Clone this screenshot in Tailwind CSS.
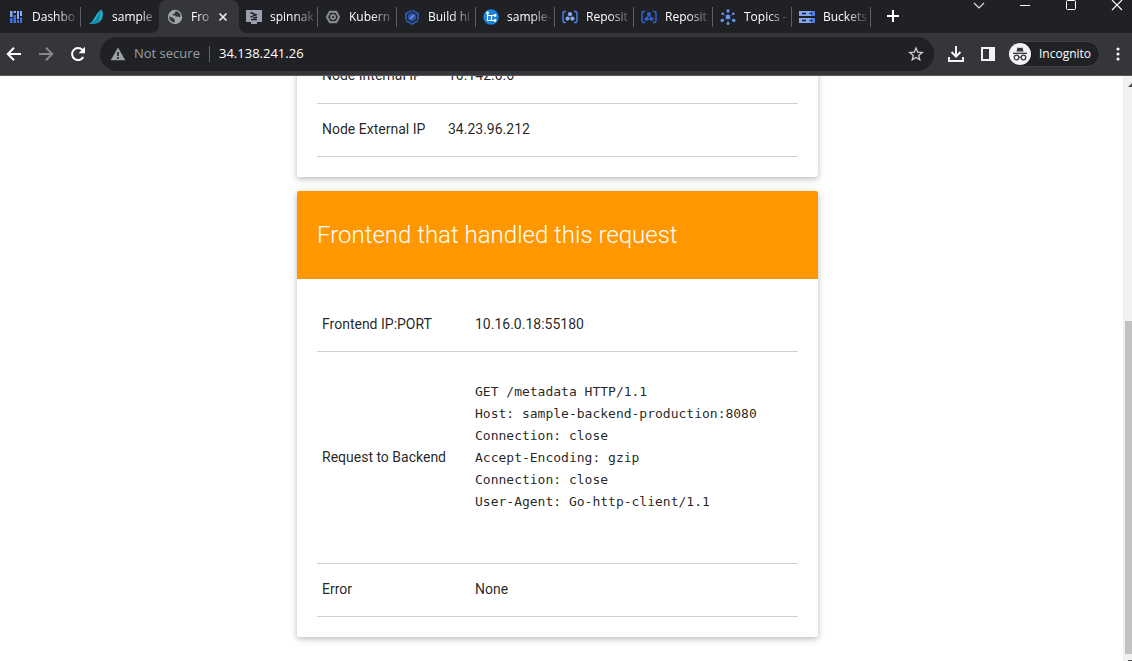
<!DOCTYPE html>
<html lang="en">
<head>
<meta charset="utf-8">
<title>Frontend</title>
<script src="https://cdn.jsdelivr.net/npm/@tailwindcss/browser@4"></script>
</head>
<body class="flex h-screen flex-col overflow-hidden bg-white font-['Roboto',sans-serif]">
<header class="shrink-0 border-b border-[#5a5659] bg-[#35363a] font-['Open_Sans','Noto_Sans',sans-serif] text-white">
  <div class="flex h-[33px] items-start bg-[#202124] pl-0.5">
    <nav class="flex text-[12px]" aria-label="Tabs">
      <a href="#" class="flex h-[33px] w-[79px] items-center pl-1.5">
        <svg class="mr-2 size-4 shrink-0" viewBox="0 0 16 16"><path d="M2 2h2.500v6H2zM5.500 2H8v2H5.500zM9 2h2v8H9zM12 2h2v5h-2z" fill="#86aaf3"/><path d="M2 9h2.500v5H2zM5.500 6H8v8H5.500zM9 11h2v3H9zM12 8.500h2V14h-2z" fill="#3f72e0"/></svg>
        <span class="flex-1 whitespace-nowrap mask-r-from-50%">Dashbo</span><span class="h-5 w-px bg-[#5f6064]"></span>
      </a>
      <a href="#" class="flex h-[33px] w-[78px] items-center pl-[7px]">
        <svg class="mr-2 size-4 shrink-0" viewBox="0 0 16 16"><path d="M13.500.500C7.500 4 6.500 12 1 15c6 0 10-.5 12.500-4.500C15.500 7 15 3 13.500.500z" fill="#1fb5d2"/><path d="M13.500.500C10 5 10 12 1 15c6 0 9-1 10.500-4.500 1-3.500.5-6.500 2-10z" fill="#128aa5"/></svg>
        <span class="flex-1 whitespace-nowrap mask-r-from-60%">sample</span>
      </a>
      <a href="#" aria-current="page" class="relative flex h-[33px] w-20 items-center rounded-t-lg bg-[#35363a] pl-2">
        <svg class="absolute bottom-0 -left-2 size-2" viewBox="0 0 8 8"><path d="M8 0v8H0a8 8 0 0 0 8-8z" fill="#35363a"/></svg>
        <svg class="absolute bottom-0 -right-2 size-2" viewBox="0 0 8 8"><path d="M0 0v8h8A8 8 0 0 1 0 0z" fill="#35363a"/></svg>
        <svg class="mr-2 size-4 shrink-0" viewBox="0 0 16 16"><circle cx="8" cy="8" r="7.200" fill="#a0a4aa"/><path d="M2.200 7.200l4.300 2.100 1.200 1.200v2.900C4.500 13.500 2 10.500 2.200 7.200zM8.500 2.300c2.300 0 5 2.200 5.200 5.200l-1.500.8-1.400-.8-2 .3-.8-1.400H6L5.600 5.200l2-.6z" fill="#35363a"/></svg>
        <span class="w-6 whitespace-nowrap mask-r-from-30%">Fro</span>
        <button aria-label="Close tab"><svg class="size-4" viewBox="0 0 16 16"><path d="M4.500 4.500l7 7M11.500 4.500l-7 7" stroke="#e8eaed" stroke-width="1.700"/></svg></button>
      </a>
      <a href="#" class="flex h-[33px] w-[79px] items-center pl-[7px]">
        <svg class="mr-2 size-4 shrink-0" viewBox="0 0 16 16"><path d="M0 1h16v12h-5v2H5v-2H0z" fill="#9aa0ae"/><path d="M4.500 3.500l5.500 2.300-5.500 2.300M5 10.500h6M11 8L7.500 9.200" fill="none" stroke="#202124" stroke-width="1.400"/></svg>
        <span class="flex-1 whitespace-nowrap mask-r-from-50%">spinnak</span><span class="h-5 w-px bg-[#5f6064]"></span>
      </a>
      <a href="#" class="flex h-[33px] w-[79px] items-center pl-[7px]">
        <svg class="mr-2 size-4 shrink-0" viewBox="0 0 16 16" fill="none" stroke="#85888c"><path d="M4.800 2.800h6.400L14 8l-2.800 5.200H4.800L2 8z" stroke-width="2.200"/><circle cx="8" cy="8" r="2" stroke-width="2"/></svg>
        <span class="flex-1 whitespace-nowrap mask-r-from-50%">Kubern</span><span class="h-5 w-px bg-[#5f6064]"></span>
      </a>
      <a href="#" class="flex h-[33px] w-[79px] items-center pl-[7px]">
        <svg class="mr-2 size-4 shrink-0" viewBox="0 0 16 16" fill="none" stroke="#2b54ab" stroke-width="2"><path d="M7.500 1.500L2 4.600v6.200M2.500 11.800L8 15l5.500-3.200M14 10.800V4.600L8.500 1.500"/><path d="M8 4l3.500 2v4L8 12l-3.500-2V6z" fill="#2b54ab" stroke-width="1"/><path d="M6 10l4-4" stroke="#7ba0ee" stroke-width="1.300"/></svg>
        <span class="flex-1 whitespace-nowrap mask-r-from-50%">Build hi</span><span class="h-5 w-px bg-[#5f6064]"></span>
      </a>
      <a href="#" class="flex h-[33px] w-[79px] items-center pl-[7px]">
        <svg class="mr-2 size-4 shrink-0" viewBox="0 0 16 16"><circle cx="8" cy="8" r="7.700" fill="#1b84e0"/><path d="M4.500 3.500v8h7M4.500 6.500h7M8.500 6.500v5" fill="none" stroke="#fff" stroke-width="1.200"/><g fill="#fff"><circle cx="4.500" cy="4" r="1.400"/><circle cx="12" cy="6.500" r="1.400"/><circle cx="12" cy="11.500" r="1.400"/></g></svg>
        <span class="flex-1 whitespace-nowrap mask-r-from-50%">sample-</span><span class="h-5 w-px bg-[#5f6064]"></span>
      </a>
      <a href="#" class="flex h-[33px] w-[79px] items-center pl-[7px]">
        <svg class="mr-2 size-4 shrink-0" viewBox="0 0 16 16"><path d="M4 2.500H2L1 4v8l1 1.500h2M12 2.500h2L15 4v8l-1 1.500h-2" fill="none" stroke="#4b7be3" stroke-width="1.500"/><g fill="#83a9f5"><circle cx="8" cy="5.200" r="2.100"/><circle cx="5.600" cy="9.600" r="2.100"/><circle cx="10.400" cy="9.600" r="2.100"/></g></svg>
        <span class="flex-1 whitespace-nowrap mask-r-from-50%">Reposit</span><span class="h-5 w-px bg-[#5f6064]"></span>
      </a>
      <a href="#" class="flex h-[33px] w-[79px] items-center pl-[7px]">
        <svg class="mr-2 size-4 shrink-0" viewBox="0 0 16 16" fill="none" stroke="#315fc9" stroke-width="1.500"><path d="M4 2.500H2L1 4v8l1 1.500h2M12 2.500h2L15 4v8l-1 1.500h-2M8 5.500L5.500 10h5z"/><g fill="#315fc9" stroke="none"><circle cx="8" cy="5" r="2"/><circle cx="5.400" cy="10" r="2"/><circle cx="10.600" cy="10" r="2"/></g></svg>
        <span class="flex-1 whitespace-nowrap mask-r-from-50%">Reposit</span><span class="h-5 w-px bg-[#5f6064]"></span>
      </a>
      <a href="#" class="flex h-[33px] w-[79px] items-center pl-[7px]">
        <svg class="mr-2 size-4 shrink-0" viewBox="0 0 16 16"><path d="M8 8V2M8 8l5-3M8 8l5 3M8 8v6M8 8l-5 3M8 8L3 5" stroke="#34518f" stroke-width="1"/><g fill="#6c97f0"><circle cx="8" cy="8" r="2.300"/><circle cx="8" cy="1.800" r="1.600"/><circle cx="8" cy="14.400" r="1.500"/><circle cx="2.200" cy="11.400" r="1.700"/><circle cx="13.800" cy="11.400" r="1.700"/><circle cx="2.700" cy="4.800" r="1.300"/><circle cx="13.300" cy="4.800" r="1.300"/></g></svg>
        <span class="flex-1 whitespace-nowrap mask-r-from-50%">Topics -</span><span class="h-5 w-px bg-[#5f6064]"></span>
      </a>
      <a href="#" class="flex h-[33px] w-[79px] items-center pl-[7px]">
        <svg class="mr-2 size-4 shrink-0" viewBox="0 0 16 16"><path d="M0 2h16v5H0zM0 9h16v5H0z" fill="#82a7f5"/><path d="M12 2h4v5h-4zM12 9h4v5h-4z" fill="#4d7de0"/><path d="M3 4.500h4M3 11.500h4M10.500 4.500h2.500M10.500 11.500h2.500" stroke="#202124" stroke-width="1.500"/></svg>
        <span class="flex-1 whitespace-nowrap mask-r-from-50%">Buckets</span><span class="h-5 w-px bg-[#5f6064]"></span>
      </a>
    </nav>
    <button class="mt-2 ml-3.5" aria-label="New tab"><svg class="size-4" viewBox="0 0 16 16"><path d="M8 2v12M2 8h12" stroke="#fff" stroke-width="2"/></svg></button>
    <div class="ml-auto flex gap-[30px] pr-[7px]">
      <button aria-label="Search tabs"><svg class="h-[11px] w-4" viewBox="0 0 16 11"><path d="M3 3l5 5 5-5" fill="none" stroke="#dfe0e2" stroke-width="1.200"/></svg></button>
      <button aria-label="Minimize"><svg class="h-[11px] w-4" viewBox="0 0 16 11"><path d="M3 5.500h10" stroke="#fff"/></svg></button>
      <button aria-label="Maximize"><svg class="h-[11px] w-4" viewBox="0 0 16 11"><rect x="3.500" y=".5" width="9" height="9" rx="1" fill="none" stroke="#fff"/></svg></button>
      <button aria-label="Close"><svg class="h-[11px] w-4" viewBox="0 0 16 11"><path d="M3 0l10 10M13 0L3 10" stroke="#fff" stroke-width="1.100"/></svg></button>
    </div>
  </div>
  <div class="flex h-[42px] items-center pr-1.5">
    <div class="flex w-[100px] shrink-0 gap-4 pl-1.5">
      <button aria-label="Back"><svg class="size-4" viewBox="0 0 16 16"><path d="M15 8H2M8 1.800L1.800 8 8 14.200" fill="none" stroke="#fff" stroke-width="2"/></svg></button>
      <button aria-label="Forward"><svg class="size-4" viewBox="0 0 16 16"><path d="M1 8h13M8 1.800L14.200 8 8 14.200" fill="none" stroke="#87888b" stroke-width="2"/></svg></button>
      <button aria-label="Reload"><svg class="size-4" viewBox="0 0 16 16"><path d="M13.300 11A6 6 0 1 1 12.500 4" fill="none" stroke="#fff" stroke-width="2"/><path d="M15 .8v6.400H8.600z" fill="#fff"/></svg></button>
    </div>
    <div class="flex h-[34px] min-w-0 flex-1 items-center rounded-full bg-[#202124] px-2.5 text-[13px]">
      <svg class="size-4 shrink-0" viewBox="0 0 16 16"><path d="M8 1.500L.7 14.300h14.600z" fill="#9aa0a6"/><path d="M8 6v4M8 11v2" stroke="#202124" stroke-width="1.600"/></svg>
      <span class="ml-2 w-[67px] whitespace-nowrap text-[#9aa0a6]">Not secure</span>
      <span class="mx-2 h-4 w-px shrink-0 bg-[#5f6368]"></span>
      <input type="text" aria-label="Address" value="34.138.241.26" class="min-w-0 flex-1 bg-transparent pl-px text-white outline-none">
      <button aria-label="Bookmark"><svg class="size-4" viewBox="0 0 16 16"><path d="M8 2l1.700 4.200 4.500.3-3.500 2.900 1.100 4.400L8 11.400l-3.800 2.400 1.100-4.400L1.800 6.500l4.500-.3z" fill="none" stroke="#d0d1d4" stroke-width="1.300"/></svg></button>
    </div>
    <button class="ml-3.5" aria-label="Downloads"><svg class="size-4" viewBox="0 0 16 16"><path d="M8 0v10M3.500 6L8 10.500 12.500 6M1 11v4h14v-4" fill="none" stroke="#f1f3f4" stroke-width="2"/></svg></button>
    <button class="ml-4" aria-label="Side panel"><svg class="size-4" viewBox="0 0 16 16"><path d="M1 1h14v14H1zM3 3v10h6V3z" fill="#f1f3f4" fill-rule="evenodd"/></svg></button>
    <button class="ml-3 flex h-[26px] w-[92px] items-center gap-2 rounded-full border border-[#3f4044] bg-[#202124] text-[12px]">
      <svg class="size-[22px] shrink-0" viewBox="0 0 22 22"><circle cx="11" cy="11" r="11" fill="#f1f3f4"/><path d="M7.500 8.500l1-4 2.500.6 2.500-.6 1 4z" fill="#35363a"/><path d="M4 10.300h14" stroke="#35363a" stroke-width="1.300"/><g fill="none" stroke="#35363a" stroke-width="1.200"><circle cx="7.500" cy="14.500" r="2.300"/><circle cx="14.500" cy="14.500" r="2.300"/><path d="M9.800 14.200h2.400"/></g></svg>
      Incognito
    </button>
    <button class="ml-2.5" aria-label="Menu"><svg class="size-4" viewBox="0 0 16 16" fill="#f1f3f4"><circle cx="8" cy="3" r="1.600"/><circle cx="8" cy="8" r="1.600"/><circle cx="8" cy="13" r="1.600"/></svg></button>
  </div>
</header>
<div class="flex min-h-0 flex-1">
  <main class="min-w-0 flex-1 overflow-hidden pr-2 text-[14px] leading-[22px] text-black/87">
    <section class="mx-auto -mt-[26px] w-full max-w-[521px] rounded-xs bg-white px-5 pb-5 shadow-[0_2px_5px_rgba(0,0,0,0.16),0_2px_10px_rgba(0,0,0,0.12)]">
      <table class="w-full table-fixed text-left">
        <colgroup><col class="w-[126px]"><col></colgroup>
        <tr class="h-[53px] border-b border-[#d0d0d0]"><th class="pb-0.5 pl-[5px] font-normal">Node Internal IP</th><td class="pb-0.5 pl-[5px]">10.142.0.6</td></tr>
        <tr class="h-[53px] border-b border-[#d0d0d0]"><th class="pb-0.5 pl-[5px] font-normal">Node External IP</th><td class="pb-0.5 pl-[5px]">34.23.96.212</td></tr>
      </table>
    </section>
    <section class="mx-auto mt-3.5 w-full max-w-[521px] overflow-hidden rounded-xs bg-white shadow-[0_2px_5px_rgba(0,0,0,0.16),0_2px_10px_rgba(0,0,0,0.12)]">
      <h2 class="bg-[#ff9800] p-5 text-[24px] leading-[48px] font-light text-white">Frontend that handled this request</h2>
      <div class="p-5">
        <table class="w-full table-fixed text-left">
          <colgroup><col class="w-[153px]"><col></colgroup>
          <tr class="h-[53px] border-b border-[#d0d0d0]"><th class="pb-0.5 pl-[5px] font-normal">Frontend IP:PORT</th><td class="pb-0.5 pl-[5px]">10.16.0.18:55180</td></tr>
          <tr class="h-[212px] border-b border-[#d0d0d0]"><th class="pb-0.5 pl-[5px] font-normal">Request to Backend</th><td class="pl-[5px]"><pre class="pb-[22px] font-['DejaVu_Sans_Mono',monospace] text-[13px] leading-[22px]">GET /metadata HTTP/1.1
Host: sample-backend-production:8080
Connection: close
Accept-Encoding: gzip
Connection: close
User-Agent: Go-http-client/1.1</pre></td></tr>
          <tr class="h-[53px] border-b border-[#d0d0d0]"><th class="pb-0.5 pl-[5px] font-normal">Error</th><td class="pb-0.5 pl-[5px]">None</td></tr>
        </table>
      </div>
    </section>
  </main>
  <div class="flex w-[9px] shrink-0 flex-col overflow-hidden bg-[#f1f1f1] pl-0.5">
    <svg class="h-4 w-[7px]" viewBox="0 0 7 16"><path d="M3 11l4-4v4z" fill="#505050"/></svg>
    <div class="mt-auto h-[57%] bg-[#c1c1c1]"></div>
    <svg class="h-[7px] w-[7px] shrink-0" viewBox="0 0 7 7"><path d="M3 6h4v1H3z" fill="#505050"/></svg>
  </div>
</div>
</body>
</html>
